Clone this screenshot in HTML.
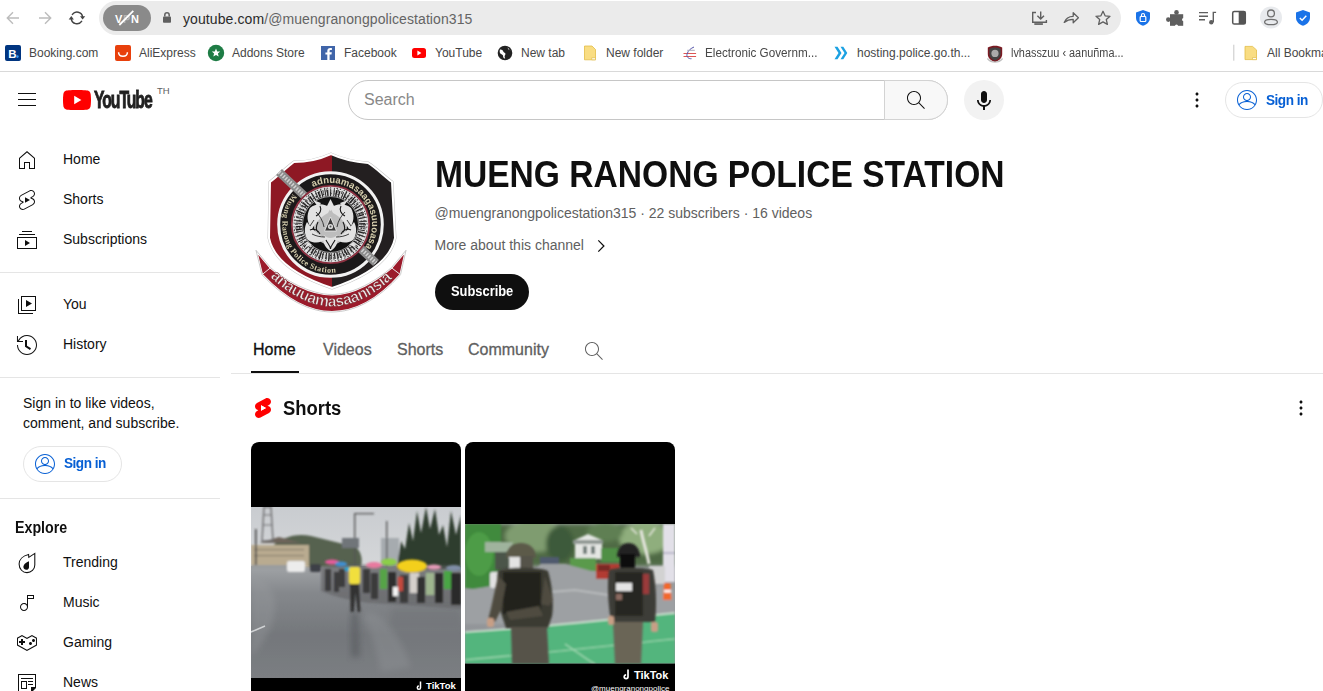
<!DOCTYPE html>
<html><head><meta charset="utf-8">
<style>
*{margin:0;padding:0;box-sizing:border-box}
html,body{width:1323px;height:691px;overflow:hidden;background:#fff;font-family:"Liberation Sans",sans-serif;color:#0f0f0f}
.a{position:absolute}
.t{position:absolute;white-space:nowrap;line-height:1}
svg{position:absolute;overflow:visible}
</style></head><body>
<!-- ===== Browser toolbar ===== -->
<div class="a" style="left:0;top:0;width:1323px;height:36px;background:#fff"></div>
<svg style="left:0;top:0" width="100" height="36">
 <g fill="none" stroke="#bcbcbc" stroke-width="1.4">
  <path d="M19 18H7.6M13 12.3 7.3 18 13 23.7"/>
  <path d="M39 18h11.4M45 12.3l5.7 5.7L45 23.7"/>
 </g>
 <g fill="none" stroke="#444" stroke-width="1.5" stroke-linecap="round">
  <path d="M72.4 14.4A5.7 5.7 0 0 1 82.6 16.8"/>
  <path d="M81.6 21.4A5.7 5.7 0 0 1 71.3 18.8"/>
 </g>
 <path d="M80 16.2H85.2L82.6 19.5z" fill="#444"/>
 <path d="M68.7 19.4H73.9L71.3 16.1z" fill="#444"/>
</svg>
<div class="a" style="left:99px;top:1px;width:1022px;height:34px;border-radius:17px;background:#ebebeb"></div>
<div class="a" style="left:103px;top:5px;width:48px;height:26px;border-radius:13px;background:#8a8a8a"></div>
<div class="t" style="left:115px;top:13.5px;font-size:11px;font-weight:bold;color:#fff;letter-spacing:0.6px">V<span style="opacity:.35">P</span>N</div>
<svg style="left:0;top:0" width="200" height="36"><path d="M119.3 25 133.3 10.8" stroke="#fff" stroke-width="1.8"/>
 <path d="M164.8 16.5v-1.6a2.2 2.2 0 0 1 4.4 0v1.6" fill="none" stroke="#5f5f5f" stroke-width="1.5"/>
 <rect x="163" y="16.4" width="8" height="6.4" rx="0.8" fill="#5f5f5f"/>
</svg>
<div class="t" style="left:183px;top:12px;font-size:14px;color:#2a2a2a;letter-spacing:0.09px">youtube.com<span style="color:#646464">/@muengranongpolicestation315</span></div>
<svg style="left:1020px;top:0" width="303" height="36">
 <g fill="none" stroke="#5f5f5f" stroke-width="1.4">
  <path d="M16 12.5h-3.3v9.8h13.7v-2.2"/>
  <path d="M20.7 11.5v7.6M17.4 15.8l3.3 3.3 3.3-3.3"/>
 </g>
 <rect x="14.3" y="23.2" width="8.6" height="1.7" fill="#5f5f5f"/>
 <path d="M44.2 22.4c1.7-4.4 5-6.1 9-6.1v-3.6l5.2 5-5.2 5v-3.4c-3.3 0-6.5 1-9 3.1z" fill="none" stroke="#5f5f5f" stroke-width="1.3" stroke-linejoin="round"/>
 <path d="M83 11.3l2.1 4.5 4.9.5-3.7 3.3 1.1 4.8L83 21.9l-4.4 2.5 1.1-4.8-3.7-3.3 4.9-.5z" fill="none" stroke="#5f5f5f" stroke-width="1.3" stroke-linejoin="round"/>
 <path d="M123 10l7 2.4v5.2c0 4.2-3 7-7 8.2-4-1.2-7-4-7-8.2v-5.2z" fill="#1a73e8"/>
 <rect x="120.2" y="16.5" width="5.6" height="5" rx="0.8" fill="none" stroke="#fff" stroke-width="1.2"/>
 <path d="M121.5 16.5v-1.5a1.5 1.5 0 0 1 3 0v1.5" fill="none" stroke="#fff" stroke-width="1.2"/>
 <rect x="150" y="14.2" width="13.2" height="11.6" fill="#5f5f5f"/>
 <circle cx="156.5" cy="12.4" r="2.3" fill="#5f5f5f"/>
 <circle cx="148.3" cy="19.6" r="2.3" fill="#5f5f5f"/>
 <circle cx="156.5" cy="26.2" r="1.6" fill="#fff"/>
 <circle cx="163.6" cy="19.6" r="1.6" fill="#fff"/>
 <g stroke="#5f5f5f" stroke-width="1.4"><path d="M179 12.6h9M179 16.2h9M179 19.8h6"/></g>
 <path d="M193.3 22V12.4h2.8" fill="none" stroke="#5f5f5f" stroke-width="1.4"/>
 <circle cx="191.3" cy="22.2" r="2.2" fill="#5f5f5f"/>
 <rect x="212.7" y="11.4" width="12.6" height="12.6" rx="1.6" fill="none" stroke="#555" stroke-width="1.5"/>
 <rect x="218.7" y="11.4" width="6.6" height="12.6" fill="#555"/>
 <circle cx="251" cy="17.5" r="11" fill="#e8eaed"/>
 <circle cx="251" cy="13.4" r="3.4" fill="none" stroke="#707070" stroke-width="1.3"/>
 <ellipse cx="251" cy="22" rx="6.4" ry="2.7" fill="none" stroke="#707070" stroke-width="1.3"/>
 <path d="M283 10l7 2.4v5.2c0 4.2-3 7-7 8.2-4-1.2-7-4-7-8.2v-5.2z" fill="#1a73e8"/>
 <path d="M279.8 18l2.3 2.3 4.2-4.6" fill="none" stroke="#fff" stroke-width="1.4"/>
</svg>
<!-- ===== Bookmarks bar ===== -->
<svg style="left:0;top:36px" width="1323" height="35">
 <rect x="5" y="9" width="16" height="16" rx="2" fill="#003580"/>
 <text x="8.3" y="21.5" font-family="Liberation Sans" font-weight="bold" font-size="11.5" fill="#fff">B</text>
 <circle cx="17.4" cy="20.6" r="1.3" fill="#3b9bf5"/>
 <rect x="115" y="9" width="16" height="16" rx="2" fill="#e8400c"/>
 <path d="M118.6 16.2c0 5.3 8.8 5.3 8.8 0" fill="none" stroke="#fff" stroke-width="1.5"/>
 <circle cx="216" cy="17" r="8.2" fill="#1e7c45"/>
 <path d="M216 12.6l1.2 2.8 3 .2-2.3 2 .8 2.9-2.7-1.6-2.7 1.6.8-2.9-2.3-2 3-.2z" fill="#fff"/>
 <rect x="321" y="10" width="14" height="14" fill="#4065a9"/>
 <path d="M329.6 24v-5.6h1.9l.3-2.1h-2.2v-1.4c0-.6.2-1 1.1-1h1.2v-1.9c-.2 0-.9-.1-1.7-.1-1.7 0-2.9 1-2.9 2.9v1.6h-1.9v2.1h1.9V24z" fill="#fff"/>
 <rect x="412" y="12" width="14" height="10" rx="2.5" fill="#f00"/>
 <path d="M417.4 14.6v4.8l4-2.4z" fill="#fff"/>
 <circle cx="505" cy="17" r="7.3" fill="#222"/>
 <path d="M500 13.5c1.5-.3 3 .6 3.2 1.8.2 1.4 1.8 1.2 2.2 2.3.3 1-.8 1.6-.8 3 0 .8.3 1.3.6 1.8-1.5.2-2.2-.9-2.1-2.3 0-1.3-1.5-1.7-2.3-2.3-.9-.6-1.5-1.6-.8-4.3zM507.5 11.3c.5.7.2 1.6 1.1 2.1.9.5 1.8.6 2.2 1.8" fill="#fff"/>
 <path d="M584.5 10h7.5l3.5 3.5v10.3h-11z" fill="#f9dd83" stroke="#e2bd48" stroke-width="0.8"/>
 <path d="M591.7 21.8h3.8v2h-3.8z" fill="#fff" stroke="#e2bd48" stroke-width="0.7"/>
 <g fill="none" stroke-width="1">
  <path d="M683.5 17.5h12.6M683.5 20.5h12.6" stroke="#d55"/>
  <path d="M694 11c-3 1.3-6 3.3-7 7.3-.6 2.6 1.5 4.7 4.5 4.4" stroke="#55a"/>
  <path d="M687.2 14.3h7.6" stroke="#aab"/>
 </g>
 <path d="M836 10.8l4 6.2-4 6.2h3l4-6.2-4-6.2zM842 10.8l4 6.2-4 6.2h2.8l4-6.2-4-6.2z" fill="#1ba1e2" transform="translate(-1.5 0)"/>
 <path d="M995 9.8c2.6 0 5 .6 7.2 1.7v6.6c0 4-3 6.8-7.2 8-4.2-1.2-7.2-4-7.2-8v-6.6c2.2-1.1 4.6-1.7 7.2-1.7z" fill="#7a1a22"/>
 <path d="M995 11.4c2 0 3.9.4 5.6 1.3v5.4c0 3.2-2.3 5.4-5.6 6.4-3.3-1-5.6-3.2-5.6-6.4v-5.4c1.7-.9 3.6-1.3 5.6-1.3z" fill="#444"/>
 <circle cx="995" cy="17.4" r="3.6" fill="#aaa"/>
 <path d="M987.4 22.5c2 2.4 4.6 3.6 7.6 3.6s5.6-1.2 7.6-3.6" fill="none" stroke="#c0c0c0" stroke-width="1.3"/>
 <rect x="1233.3" y="8.7" width="1" height="16" fill="#c8c8c8"/>
 <path d="M1245 10.4h7.5l4 3.5v9.7H1245z" fill="#f9dd83" stroke="#e2bd48" stroke-width="0.8"/>
 <path d="M1252.5 21.6h4v2h-4z" fill="#fff" stroke="#e2bd48" stroke-width="0.7"/>
</svg>
<div class="t" style="left:29px;top:47px;font-size:12px;color:#474747">Booking.com</div>
<div class="t" style="left:139px;top:47px;font-size:12px;color:#474747">AliExpress</div>
<div class="t" style="left:232px;top:47px;font-size:12px;color:#474747">Addons Store</div>
<div class="t" style="left:344px;top:47px;font-size:12px;color:#474747">Facebook</div>
<div class="t" style="left:435px;top:47px;font-size:12px;color:#474747">YouTube</div>
<div class="t" style="left:521px;top:47px;font-size:12px;color:#474747">New tab</div>
<div class="t" style="left:606px;top:47px;font-size:12px;color:#474747">New folder</div>
<div class="t" style="left:705px;top:47px;font-size:12px;color:#474747;transform-origin:0 0;transform:scaleX(0.975)">Electronic Governm...</div>
<div class="t" style="left:857px;top:47px;font-size:12px;color:#474747">hosting.police.go.th...</div>
<div class="t" style="left:1011px;top:47px;font-size:12px;color:#474747;transform-origin:0 0;transform:scaleX(0.907)">lvhasszuu ‹ aanuñma...</div>
<div class="t" style="left:1267px;top:47px;font-size:12px;color:#474747">All Bookmarks</div>
<div class="a" style="left:0;top:71px;width:1323px;height:1px;background:#d9d9d9"></div>
<!-- ===== Masthead ===== -->
<div class="a" style="left:348px;top:80px;width:600px;height:40px;border:1px solid #c6c6c6;border-radius:20px;background:#fff"></div>
<div class="a" style="left:884px;top:80px;width:64px;height:40px;border:1px solid #d3d3d3;border-radius:0 20px 20px 0;background:#f8f8f8"></div>
<div class="t" style="left:364px;top:92px;font-size:16px;color:#888">Search</div>
<div class="a" style="left:964px;top:80px;width:40px;height:40px;border-radius:20px;background:#f2f2f2"></div>
<div class="a" style="left:1225px;top:82px;width:98px;height:36px;border:1px solid #e5e5e5;border-radius:18px"></div>
<div class="t" style="left:1266px;top:93px;font-size:14px;font-weight:bold;color:#065fd4;letter-spacing:-0.5px;transform-origin:0 0;transform:scaleX(0.97)">Sign in</div>
<!-- ===== Sidebar ===== -->
<div class="t" style="left:63px;top:152px;font-size:14px">Home</div>
<div class="t" style="left:63px;top:192px;font-size:14px">Shorts</div>
<div class="t" style="left:63px;top:232px;font-size:14px">Subscriptions</div>
<div class="a" style="left:0;top:272px;width:220px;height:1px;background:#e5e5e5"></div>
<div class="t" style="left:63px;top:297px;font-size:14px">You</div>
<div class="t" style="left:63px;top:337px;font-size:14px">History</div>
<div class="a" style="left:0;top:377px;width:220px;height:1px;background:#e5e5e5"></div>
<div class="t" style="left:23px;top:397px;font-size:14px;line-height:20px;top:393px">Sign in to like videos,<br>comment, and subscribe.</div>
<div class="a" style="left:23px;top:446px;width:99px;height:36px;border:1px solid #e5e5e5;border-radius:18px"></div>
<div class="t" style="left:64px;top:456px;font-size:14px;font-weight:bold;color:#065fd4;letter-spacing:-0.5px;transform-origin:0 0;transform:scaleX(0.97)">Sign in</div>
<div class="a" style="left:0;top:498px;width:220px;height:1px;background:#e5e5e5"></div>
<div class="t" style="left:15px;top:520px;font-size:16px;font-weight:bold;transform-origin:0 0;transform:scaleX(0.89)">Explore</div>
<div class="t" style="left:63px;top:555px;font-size:14px">Trending</div>
<div class="t" style="left:63px;top:595px;font-size:14px">Music</div>
<div class="t" style="left:63px;top:635px;font-size:14px">Gaming</div>
<div class="t" style="left:63px;top:675px;font-size:14px">News</div>
<!-- ===== Channel header ===== -->
<div class="t" style="left:434.5px;top:157px;font-size:36px;font-weight:bold;transform-origin:0 0;transform:scaleX(0.9326)">MUENG RANONG POLICE STATION</div>
<div class="t" style="left:434.5px;top:206px;font-size:14px;color:#606060">@muengranongpolicestation315 · 22 subscribers · 16 videos</div>
<div class="t" style="left:434.5px;top:238px;font-size:14px;color:#606060">More about this channel</div>
<div class="a" style="left:435px;top:274px;width:94px;height:36px;border-radius:18px;background:#0f0f0f"></div>
<div class="t" style="left:451px;top:284px;font-size:14px;font-weight:bold;color:#fff;transform-origin:0 0;transform:scaleX(0.92)">Subscribe</div>
<!-- tabs -->
<div class="t" style="left:253px;top:342px;font-size:16px;color:#0f0f0f;-webkit-text-stroke:0.3px #0f0f0f">Home</div>
<div class="t" style="left:323px;top:342px;font-size:16px;color:#606060;-webkit-text-stroke:0.3px #606060">Videos</div>
<div class="t" style="left:397px;top:342px;font-size:16px;color:#606060;-webkit-text-stroke:0.3px #606060">Shorts</div>
<div class="t" style="left:468px;top:342px;font-size:16px;color:#606060;-webkit-text-stroke:0.3px #606060">Community</div>
<div class="a" style="left:251px;top:371px;width:48px;height:2px;background:#0f0f0f"></div>
<div class="a" style="left:231px;top:373px;width:1092px;height:1px;background:#e5e5e5"></div>
<!-- shorts -->
<div class="t" style="left:283px;top:398px;font-size:20px;font-weight:bold;transform-origin:0 0;transform:scaleX(0.92)">Shorts</div>
<!-- ===== Avatar ===== -->
<svg style="left:250px;top:150px" width="165" height="165" viewBox="0 0 165 165">
 <defs>
  <clipPath id="shc"><path d="M81 4C70 9 56 12 44 12 36 18 28 26 20 32L19 88C24 112 52 128 82 138 112 128 140 112 145 88L142 32C134 26 126 18 118 13 106 12 92 9 81 4Z"/></clipPath>
  <filter id="bl" x="-20%" y="-20%" width="140%" height="140%"><feGaussianBlur stdDeviation="0.45"/></filter>
  <path id="topArc" d="M59.75 38.56A41.5 41.5 0 0 1 112.3 101.2"/>
  <path id="botArc" d="M52.7 34.8A48.5 48.5 0 0 0 104.75 116.5"/>
  <path id="ribArc" d="M20 127C40 146 62 156.5 82 156.5 102 156.5 124 146 144 127"/>
 </defs>
 <path d="M81 4C70 9 56 12 44 12 36 18 28 26 20 32L19 88C24 112 52 128 82 138 112 128 140 112 145 88L142 32C134 26 126 18 118 13 106 12 92 9 81 4Z" fill="#fff" stroke="#c4c4c4" stroke-width="3"/>
 <g clip-path="url(#shc)">
  <rect x="0" y="0" width="82" height="165" fill="#8e1824"/>
  <rect x="82" y="0" width="83" height="165" fill="#231f20"/>
 </g>
 <path d="M81 4C70 9 56 12 44 12 36 18 28 26 20 32L19 88C24 112 52 128 82 138 112 128 140 112 145 88L142 32C134 26 126 18 118 13 106 12 92 9 81 4Z" fill="none" stroke="#fff" stroke-width="2"/>
 <circle cx="80.5" cy="74.5" r="51.8" fill="#1b191a" stroke="#f2f2f2" stroke-width="3"/>
 <g font-family="Liberation Serif" font-weight="bold" fill="#d6cfae" filter="url(#bl)">
  <text font-size="9.5" font-family="Liberation Sans" letter-spacing="0"><textPath href="#topArc" startOffset="3%">adnuamasaagasuuoasazuoy</textPath></text>
  <text font-size="8" letter-spacing="0.45"><textPath href="#botArc" startOffset="9%">Muang Ranong Police Station</textPath></text>
 </g>
 <path d="M29 22 L126 113" stroke="#8c8c8c" stroke-width="8.5"/>
 <path d="M29 22 L126 113" stroke="#d0d0d0" stroke-width="4" stroke-dasharray="1.5 1.5"/>
 <circle cx="80.5" cy="74.5" r="38.6" fill="#1b191a" stroke="#8b3040" stroke-width="2"/>
 <circle cx="80.5" cy="74.5" r="33" fill="none" stroke="#d4d4d4" stroke-width="9" stroke-dasharray="1.8 1.1 2.6 0.9 1.2 1.4" filter="url(#bl)"/>
 <circle cx="80.5" cy="74.5" r="31" fill="none" stroke="#333" stroke-width="1.6" stroke-dasharray="0.8 2.2 1.5 3" filter="url(#bl)"/>
 <circle cx="80.5" cy="74.5" r="35.5" fill="none" stroke="#f0f0f0" stroke-width="1.2" stroke-dasharray="3 1.5" filter="url(#bl)"/>
 <circle cx="80.5" cy="74.5" r="34" fill="none" stroke="#4a4a4a" stroke-width="3" stroke-dasharray="1 2.8" filter="url(#bl)"/>
 <circle cx="80.5" cy="74.5" r="37.4" fill="none" stroke="#e8e8e8" stroke-width="0.8"/>
 <circle cx="80.5" cy="74.5" r="28" fill="#121212" stroke="#9a9a9a" stroke-width="1"/>
 <path d="M66 66C70 60 76 58 80.5 60 85 58 91 60 95 66 99 74 97 86 90 92 84 96 77 96 71 92 64 86 62 74 66 66z" fill="#bdbdbd" filter="url(#bl)"/>
 <g fill="#e2e2e2" filter="url(#bl)">
  <path d="M80.5 49 84.5 57 80.5 61 76.5 57z"/>
  <path d="M80.5 58C74 53 66 53 60 58 56 65 57 73 62 79 66 72 72 66 78 63z"/>
  <path d="M80.5 58C87 53 95 53 101 58 105 65 104 73 99 79 95 72 89 66 83 63z"/>
  <path d="M57 72C54 77 54 85 58 90 64 94 71 93 76 89 69 85 62 80 57 72z"/>
  <path d="M104 72C107 77 107 85 103 90 97 94 90 93 85 89 92 85 99 80 104 72z"/>
  <path d="M74 85C72 91 74 97 80.5 101 87 97 89 91 87 85 84 89 77 89 74 85z"/>
  <path d="M68 57 63 50 71 53zM93 57 98 50 90 53zM58 92 55 97 62 95zM103 92 106 97 99 95z"/>
 </g>
 <g fill="none" stroke="#161616" stroke-width="0.8">
  <path d="M66 62C70 66 73 71 74 77M95 62C91 66 88 71 87 77M62 84C66 86 70 87 75 87M99 84C95 86 91 87 86 87M64 70 60 76M97 70 101 76"/>
  <path d="M70 56C72 60 70 64 66 66M91 56C89 60 91 64 95 66M60 80C64 78 68 80 70 84M101 80C97 78 93 80 91 84M76 90C78 94 80.5 96 80.5 99M85 90C83 94 80.5 96 80.5 99M68 72C66 76 66 80 68 82M93 72C95 76 95 80 93 82" stroke-width="1.1"/>
 </g>
 <path d="M74.5 81 80.5 67 86.5 81z" fill="#3a3a3a" stroke="#e6e6e6" stroke-width="0.9"/>
 <circle cx="80.5" cy="76.5" r="2.6" fill="#d8d8d8"/>
 <circle cx="80.5" cy="76.5" r="1" fill="#555"/>
 <path d="M6 100.3L20.6 117.7C35 130 60 144.5 82 144.5 104 144.5 127 130 141.4 117.7L156 100.3 150.5 124.7C128 150 104 162 82 162 60 162 36 150 12 124.7Z" fill="#9b1b2b" stroke="#fff" stroke-width="2.2"/>
 <path d="M6 100.3L20.6 117.7C35 130 60 144.5 82 144.5 104 144.5 127 130 141.4 117.7L156 100.3 150.5 124.7C128 150 104 162 82 162 60 162 36 150 12 124.7Z" fill="none" stroke="#b5b5b5" stroke-width="0.7"/>
 <path d="M20.6 117.7 12 124.7M141.4 117.7 150.5 124.7" stroke="#e8e8e8" stroke-width="1"/>
 <g font-family="Liberation Sans" font-weight="bold" fill="#e8e2e2" stroke="#6a1018" stroke-width="0.5" filter="url(#bl)">
  <text font-size="15.5" letter-spacing="-0.3"><textPath href="#ribArc" startOffset="0%">anauuamasaannsıaonsauau</textPath></text>
 </g>
</svg>
<!-- ===== Shorts thumbnails ===== -->
<svg style="left:251px;top:442px" width="210" height="249" viewBox="0 0 210 249">
 <defs>
  <clipPath id="c1"><path d="M8 0H202A8 8 0 0 1 210 8V260H0V8A8 8 0 0 1 8 0Z"/></clipPath>
  <clipPath id="p1"><rect x="0" y="0" width="210" height="171"/></clipPath>
  <linearGradient id="sky1" x1="0" y1="0" x2="0" y2="1"><stop offset="0" stop-color="#c9ccd0"/><stop offset="1" stop-color="#d5d7d9"/></linearGradient>
  <linearGradient id="road1" x1="0" y1="0" x2="0" y2="1"><stop offset="0.33" stop-color="#a3a6a9"/><stop offset="0.5" stop-color="#85888c"/><stop offset="0.75" stop-color="#74777b"/><stop offset="1" stop-color="#7b7e82"/></linearGradient>
  <filter id="b1" x="-10%" y="-10%" width="120%" height="120%"><feGaussianBlur stdDeviation="1.1"/></filter>
  <filter id="b0" x="-5%" y="-5%" width="110%" height="110%"><feGaussianBlur stdDeviation="0.6"/></filter>
  <filter id="b2" x="-50%" y="-50%" width="200%" height="200%"><feGaussianBlur stdDeviation="3"/></filter>
 </defs>
 <g clip-path="url(#c1)">
  <rect width="210" height="249" fill="#000"/>
  <g transform="translate(0 65)" clip-path="url(#p1)">
  <g filter="url(#b0)">
   <rect width="210" height="171" fill="url(#road1)"/>
   <rect width="210" height="59" fill="url(#sky1)"/>
   <g filter="url(#b1)">
    <path d="M18 42C30 30 45 26 60 29 75 33 90 36 105 40 110 45 112 52 110 60H18z" fill="#56624f"/>
    <path d="M0 38h58v22H0z" fill="#b9ab90"/>
    <path d="M8 36 28 30 50 36z" fill="#6d645a"/>
    <rect x="3" y="42" width="50" height="1.2" fill="#8b8070"/>
    <rect x="3" y="48" width="50" height="1.2" fill="#8b8070"/>
    <path d="M13 0h7l2 34h-11z" fill="none" stroke="#6e6e70" stroke-width="1.4"/>
    <path d="M13 8h7M12 18h9" stroke="#6e6e70" stroke-width="1"/>
    <rect x="4" y="22" width="1.6" height="38" fill="#444"/>
    <path d="M103 6h20v1.2h-18.6V60H103z" fill="#555"/>
    <rect x="91" y="31" width="17" height="10" fill="#6f7479"/>
    <rect x="130" y="31" width="18" height="28" fill="#a6abaf"/>
    <rect x="135" y="14" width="1.4" height="46" fill="#555"/>
    <path d="M146 60 150 34 154 42 158 16 162 34 166 4 170 26 175 0 179 22 184 2 188 28 192 18 196 40 200 4 205 28 210 8V62H146z" fill="#2f3c2d"/>
    <rect x="36" y="54" width="18" height="11" rx="2" fill="#ececec"/>
    <rect x="59" y="57" width="11" height="8" rx="2" fill="#3d4146"/>
    <path d="M0 58h36v4H0z" fill="#9a9c9e"/>
   </g>
   <g filter="url(#b1)">
    <path d="M70 60C90 57 130 57 210 59V102C180 100 150 98 120 96 100 94 85 90 70 84z" fill="#5f6164" opacity=".6"/>
    <ellipse cx="81" cy="55" rx="7" ry="2.6" fill="#e45a9a"/>
    <ellipse cx="90" cy="57" rx="6" ry="2.6" fill="#3f8fd0"/>
    <ellipse cx="97" cy="62" rx="4" ry="2" fill="#2aa2cf"/>
    <ellipse cx="123" cy="58" rx="8" ry="3" fill="#e8799f"/>
    <ellipse cx="138" cy="55" rx="8" ry="3.5" fill="#8ccf4a"/>
    <ellipse cx="161" cy="59" rx="15" ry="6.5" fill="#f3cf1c"/>
    <ellipse cx="183" cy="60" rx="7" ry="2.6" fill="#e49bb8"/>
    <ellipse cx="203" cy="61" rx="8" ry="3" fill="#7f8ea6"/>
    <rect x="98" y="60" width="11" height="17" rx="2" fill="#f1df3e"/>
    <path d="M99 77h9l1.5 28h-3l-2-20-1.5 20h-3.5z" fill="#333"/>
    <path d="M74 62h6v22h-6zM83 65h5v20h-5zM88 62h6v18h-6z" fill="#3c3c3c"/>
    <path d="M112 62h7v24h-7zM120 66h7v26h-7z" fill="#3a3a3a"/>
    <rect x="129" y="62" width="7" height="20" fill="#56a447"/>
    <path d="M137 65h8v30h-8z" fill="#2f2f2f"/>
    <rect x="142" y="80" width="5" height="9" fill="#f4f4f4"/>
    <path d="M149 68h8v28h-8z" fill="#3b3b3b"/>
    <rect x="147" y="70" width="5" height="14" fill="#c34a3c"/>
    <rect x="159" y="66" width="9" height="20" fill="#d5d0cb"/>
    <path d="M166 70h8v26h-8z" fill="#333"/>
    <rect x="175" y="66" width="8" height="22" fill="#9eb58e"/>
    <path d="M184 66h8v30h-8z" fill="#2c2c2c"/>
    <rect x="193" y="64" width="8" height="18" fill="#4aa545"/>
    <path d="M200 66h10v32h-10z" fill="#2b2b2b"/>
   </g>
   <path d="M0 70C20 72 30 90 20 120 10 140 0 150 0 150z" fill="#9b9ea1" opacity=".35" filter="url(#b2)"/>
   <path d="M120 105C135 110 150 130 160 160L130 165C125 140 118 120 112 108z" fill="#9a9da0" opacity=".3" filter="url(#b2)"/>
   <path d="M100 105h7l2 45h-9z" fill="#55585c" opacity=".6" filter="url(#b2)"/>
   <path d="M140 100h70v20h-70z" fill="#6f7276" opacity=".45" filter="url(#b2)"/>
   <path d="M0 125 14 119" stroke="#d0d2d4" stroke-width="1.5"/>
  </g>
  </g>
  <text x="175" y="247" font-family="Liberation Sans" font-weight="bold" font-size="9.5" fill="#fff">TikTok</text>
  <path d="M169.5 239.5v6.2a1.6 1.6 0 1 1-1.6-1.6" fill="none" stroke="#fff" stroke-width="1.5"/>
 </g>
</svg>
<svg style="left:465px;top:442px" width="210" height="249" viewBox="0 0 210 249">
 <defs>
  <clipPath id="c2"><path d="M8 0H202A8 8 0 0 1 210 8V260H0V8A8 8 0 0 1 8 0Z"/></clipPath>
  <clipPath id="p2"><rect x="0" y="0" width="210" height="139.5"/></clipPath>
  <filter id="b3" x="-10%" y="-10%" width="120%" height="120%"><feGaussianBlur stdDeviation="1.1"/></filter>
  <filter id="b4" x="-10%" y="-10%" width="120%" height="120%"><feGaussianBlur stdDeviation="2"/></filter>
  <linearGradient id="rd2" x1="0" y1="0" x2="0" y2="1"><stop offset="0" stop-color="#a2a5a8"/><stop offset="1" stop-color="#8d9094"/></linearGradient>
 </defs>
 <g clip-path="url(#c2)">
  <rect width="210" height="249" fill="#000"/>
  <g transform="translate(0 82)" clip-path="url(#p2)">
   <rect width="210" height="140" fill="url(#rd2)"/>
   <g filter="url(#b4)">
    <rect width="210" height="42" fill="#4f6b45"/>
    <ellipse cx="70" cy="12" rx="30" ry="16" fill="#7f9c70"/>
    <ellipse cx="95" cy="20" rx="14" ry="18" fill="#3e5a3a"/>
    <ellipse cx="180" cy="14" rx="26" ry="16" fill="#8fae7d"/>
    <ellipse cx="140" cy="8" rx="18" ry="10" fill="#5f7f52"/>
   </g>
   <g filter="url(#b3)">
    <path d="M0 0h36v62C25 66 12 66 0 64z" fill="#3f8a3d"/>
    <ellipse cx="14" cy="30" rx="14" ry="22" fill="#4d9c46"/>
    <path d="M20 18h28v10H20z" fill="#9fb39d"/>
    <path d="M30 28h18v18H30z" fill="#4b5548"/>
    <path d="M110 16 123 10 137 16V35H110z" fill="#e4e6e3"/>
    <path d="M108 16h30v4h-30z" fill="#8e9692"/>
    <path d="M118 22h4v8h-4zM126 22h4v8h-4z" fill="#6e7a78"/>
    <path d="M105 34h26v13h-26z" fill="#5a9a4c"/>
    <path d="M136 24h20v14h-20z" fill="#4f8f45"/>
    <path d="M176 6C178 18 182 28 184 40" stroke="#e6e6df" stroke-width="3" fill="none"/>
    <path d="M184 12 190 4M172 10 166 4" stroke="#e6e6df" stroke-width="1.5"/>
    <path d="M198 0h12v58h-12z" fill="#e2e0e8"/>
    <path d="M198 28h12v2h-12z" fill="#b9b6c9"/>
    <path d="M75 33h19v7H75z" fill="#4f5a6e"/>
    <path d="M0 66C30 62 60 56 76 40H100L130 48 210 66V100H0z" fill="#9da0a3"/>
    <path d="M60 70 110 66 150 72" stroke="#b8babc" stroke-width="2" fill="none"/>
    <rect x="25" y="48" width="20" height="16" rx="2" fill="#e2e2e2"/>
    <path d="M131 40h24v15h-24z" fill="#b23a33"/>
    <rect x="133" y="41" width="12" height="6" fill="#7a2a28"/>
    <rect x="184" y="42" width="16" height="18" fill="#d2d2d2"/>
    <path d="M0 108C70 104 140 96 210 89V140H0z" fill="#52b57d"/>
    <path d="M0 108C70 104 140 96 210 89" stroke="#d4ead9" stroke-width="1.6" fill="none"/>
    <path d="M0 136C70 130 140 122 210 115" stroke="#a6dbb6" stroke-width="1.2" fill="none"/>
    <path d="M100 120C115 130 125 138 130 140" stroke="#a6dbb6" stroke-width="1.2" fill="none"/>
    <path d="M199 59h6.5l1 17h-8.5z" fill="#f2682b"/>
    <rect x="199" y="66" width="7" height="2.5" fill="#fff"/>
   </g>
   <g filter="url(#b3)">
    <path d="M41 34C41 24 48 19 56 19 64 19 71 24 71 34z" fill="#5c5a4a"/>
    <path d="M44 33h12v13H44z" fill="#e3e3e3"/>
    <path d="M55 32h13v14H55z" fill="#55524a"/>
    <path d="M33 46C40 43 76 43 83 47 87 60 89 80 87 92L83 104H41L37 92C33 80 31 60 33 46z" fill="#3b3a33"/>
    <path d="M38 48h38v42H38z" fill="#22221e"/>
    <path d="M33 52 26 84 23 96 30 98 36 86 41 60z" fill="#4f4c40"/>
    <path d="M80 52 88 76 84 82 76 80z" fill="#4f4c40"/>
    <path d="M41 88 74 82 78 92 45 96z" fill="#4f4c40"/>
    <rect x="22" y="94" width="7" height="9" rx="2" fill="#c79f86"/>
    <path d="M46 103h36l2 37H47z" fill="#57534a"/>
    <path d="M152 33C152 24 157 19 163.5 19 170 19 175 24 175 33z" fill="#232323"/>
    <path d="M155 30h15v15h-15z" fill="#111"/>
    <path d="M144 46C150 43 180 43 188 46 191 60 192 80 190 98H146C143 80 142 60 144 46z" fill="#3e3c37"/>
    <path d="M150 48h28v44h-28z" fill="#262622"/>
    <rect x="151" y="59" width="16" height="8" fill="#e4e4e4"/>
    <rect x="151" y="70" width="6" height="6" fill="#8a6a60"/>
    <path d="M178 50h6v20h-6z" fill="#9a3a3a"/>
    <path d="M148 98h30l-2 42h-26z" fill="#6b6556"/>
    <rect x="143" y="92" width="6" height="9" rx="2" fill="#c79f86"/>
    <rect x="186" y="98" width="7" height="10" rx="2" fill="#c79f86"/>
   </g>
  </g>
  <text x="169" y="237" font-family="Liberation Sans" font-weight="bold" font-size="11" fill="#fff">TikTok</text>
  <path d="M163 227.5v7.2a1.9 1.9 0 1 1-1.9-1.9" fill="none" stroke="#fff" stroke-width="1.7"/>
  <text x="126" y="248.5" font-family="Liberation Sans" font-size="8" fill="#fff">@muengranongpolice</text>
 </g>
</svg>
<!-- ===== Masthead icons ===== -->
<svg style="left:15px;top:88px" width="24" height="24" viewBox="0 0 24 24"><path d="M21 6H3V5h18v1zm0 5H3v1h18v-1zm0 6H3v1h18v-1z" fill="#0f0f0f"/></svg>
<svg style="left:63px;top:90px" width="28" height="20" viewBox="0 0 28 20"><path d="M27.4 3.1A3.6 3.6 0 0 0 24.9.6C22.7 0 14 0 14 0S5.3 0 3.1.6A3.6 3.6 0 0 0 .6 3.1C0 5.3 0 10 0 10s0 4.7.6 6.9a3.6 3.6 0 0 0 2.5 2.5C5.3 20 14 20 14 20s8.7 0 10.9-.6a3.6 3.6 0 0 0 2.5-2.5C28 14.7 28 10 28 10s0-4.7-.6-6.9z" fill="#f00"/><path d="M11.2 14.3 18.4 10l-7.2-4.3z" fill="#fff"/></svg>
<div class="t" style="left:94px;top:88px;font-size:24px;font-weight:bold;color:#212121;letter-spacing:-1.6px;-webkit-text-stroke:0.9px #212121;transform-origin:0 0;transform:scaleX(0.655)">YouTube</div>
<div class="t" style="left:157px;top:86px;font-size:9.5px;color:#606060">TH</div>
<svg style="left:904px;top:88px" width="24" height="24" viewBox="0 0 24 24"><path d="m20.87 20.17-5.59-5.59C16.35 13.35 17 11.75 17 10c0-3.87-3.13-7-7-7s-7 3.13-7 7 3.13 7 7 7c1.75 0 3.35-.65 4.58-1.71l5.59 5.59.7-.71zM10 16c-3.31 0-6-2.69-6-6s2.69-6 6-6 6 2.69 6 6-2.69 6-6 6z" fill="#0f0f0f"/></svg>
<svg style="left:972px;top:88px" width="24" height="24" viewBox="0 0 24 24"><path d="M12 15c1.66 0 2.99-1.34 2.99-3L15 6c0-1.66-1.34-3-3-3S9 4.34 9 6v6c0 1.66 1.34 3 3 3zm5.3-3c0 3-2.54 5.1-5.3 5.1S6.7 15 6.7 12H5c0 3.42 2.72 6.23 6 6.72V22h2v-3.28c3.28-.48 6-3.3 6-6.72h-1.7z" fill="#0f0f0f"/></svg>
<svg style="left:1185px;top:88px" width="24" height="24" viewBox="0 0 24 24"><path d="M12 16.5c.83 0 1.5.67 1.5 1.5s-.67 1.5-1.5 1.5-1.5-.67-1.5-1.5.67-1.5 1.5-1.5zM10.5 12c0 .83.67 1.5 1.5 1.5s1.5-.67 1.5-1.5-.67-1.5-1.5-1.5-1.5.67-1.5 1.5zm0-6c0 .83.67 1.5 1.5 1.5s1.5-.67 1.5-1.5-.67-1.5-1.5-1.5-1.5.67-1.5 1.5z" fill="#0f0f0f"/></svg>
<svg style="left:1235px;top:88px" width="24" height="24" viewBox="0 0 24 24"><path d="M12 2C6.48 2 2 6.480 2 12s4.48 10 10 10 10-4.48 10-10S17.52 2 12 2zm0 1c4.960 0 9 4.04 9 9 0 1.42-.34 2.76-.93 3.96-1.53-1.72-3.98-2.89-7.38-3.030C14.57 12.6 16 10.97 16 9c0-2.21-1.79-4-4-4S8 6.79 8 9c0 1.97 1.43 3.6 3.31 3.93-3.4.14-5.85 1.31-7.38 3.030C3.34 14.76 3 13.42 3 12c0-4.96 4.04-9 9-9zM9 9c0-1.65 1.35-3 3-3s3 1.35 3 3-1.35 3-3 3-3-1.35-3-3zm3 12c-3.16 0-5.94-1.64-7.55-4.12C6.01 14.93 8.61 13.9 12 13.9c3.390 0 5.99 1.03 7.55 2.98C17.94 19.36 15.16 21 12 21z" fill="#065fd4"/></svg>
<!-- ===== Sidebar icons ===== -->
<svg style="left:15px;top:148px" width="24" height="24" viewBox="0 0 24 24"><path d="m12 4.44 7 6.09V20h-4v-6H9v6H5v-9.47l7-6.09m0-1.32-8 6.96V21h6v-6h4v6h6V10.08l-8-6.96z" fill="#0f0f0f"/></svg>
<svg style="left:15px;top:188px" width="24" height="24" viewBox="0 0 24 24"><path d="M10 14.65v-5.3L15 12l-5 2.65zm7.77-4.33c-.77-.32-1.2-.5-1.2-.5L18 9.06c1.84-.96 2.53-3.23 1.56-5.06s-3.24-2.53-5.07-1.56L6 6.94c-1.29.68-2.07 2.04-2 3.49.07 1.42.93 2.67 2.22 3.25.03.01 1.2.5 1.2.5L6 14.93c-1.83.97-2.53 3.24-1.56 5.07.97 1.83 3.24 2.53 5.07 1.56l8.5-4.5c1.29-.68 2.06-2.04 1.99-3.49-.07-1.42-.94-2.68-2.23-3.25zm-.23 5.86-8.5 4.5c-1.34.71-3.01.2-3.72-1.14-.71-1.34-.2-3.01 1.14-3.72l2.04-1.08v-1.21l-.69-.28-1.11-.46c-.99-.41-1.650-1.35-1.7-2.41-.05-1.06.52-2.06 1.46-2.56l8.5-4.5c1.34-.71 3.01-.2 3.72 1.14.71 1.34.2 3.01-1.14 3.72L15.5 9.26v1.21l1.8.74c.99.41 1.65 1.35 1.7 2.41.05 1.06-.52 2.06-1.46 2.56z" fill="#0f0f0f"/></svg>
<svg style="left:15px;top:228px" width="24" height="24" viewBox="0 0 24 24"><path d="M10 18v-6l5 3-5 3zm7-15H7v1h10V3zm3 3H4v1h16V6zm2 3H2v12h20V9zM3 10h18v10H3V10z" fill="#0f0f0f"/></svg>
<svg style="left:15px;top:293px" width="24" height="24" viewBox="0 0 24 24"><path d="m11 7 6 3.5-6 3.5V7zm7 13H4V6H3v15h15v-1zm3-2H6V3h15v15zM7 17h13V4H7v13z" fill="#0f0f0f"/></svg>
<svg style="left:15px;top:333px" width="24" height="24" viewBox="0 0 24 24"><path d="M14.97 16.95 10 13.87V7h2v5.76l4.03 2.49-1.06 1.7zM22 12c0 5.51-4.49 10-10 10S2 17.51 2 12h1c0 4.96 4.04 9 9 9s9-4.04 9-9-4.04-9-9-9C8.81 3 5.92 4.64 4.28 7.38c-.11.18-.22.37-.31.56L3.94 8H8v1H1.96V3h1v4.74c.04-.09.07-.17.11-.25.11-.22.23-.42.35-.63C5.22 3.86 8.51 2 12 2c5.51 0 10 4.49 10 10z" fill="#0f0f0f"/></svg>
<svg style="left:33px;top:452px" width="24" height="24" viewBox="0 0 24 24"><path d="M12 2C6.48 2 2 6.480 2 12s4.48 10 10 10 10-4.48 10-10S17.52 2 12 2zm0 1c4.960 0 9 4.04 9 9 0 1.42-.34 2.76-.93 3.96-1.53-1.72-3.98-2.89-7.38-3.030C14.57 12.6 16 10.97 16 9c0-2.21-1.79-4-4-4S8 6.79 8 9c0 1.97 1.43 3.6 3.31 3.93-3.4.14-5.85 1.31-7.38 3.030C3.34 14.76 3 13.42 3 12c0-4.96 4.04-9 9-9zM9 9c0-1.65 1.35-3 3-3s3 1.35 3 3-1.35 3-3 3-3-1.35-3-3zm3 12c-3.16 0-5.94-1.64-7.55-4.12C6.01 14.93 8.61 13.9 12 13.9c3.390 0 5.99 1.03 7.55 2.98C17.940 19.36 15.16 21 12 21z" fill="#065fd4"/></svg>
<svg style="left:15px;top:551px" width="24" height="24" viewBox="0 0 24 24"><path d="M13.6 3.5 13.8 6.4 19.8 2.4V14C19.8 18.4 16.2 21.6 12 21.6S4.1 18.2 4.1 13C4.1 8.5 8 4.8 13.6 3.5Z" fill="none" stroke="#0f0f0f" stroke-width="1.05"/><path d="M14 10.2V16.2C14 17.7 12.9 18.8 11.3 18.8 9.7 18.8 8.4 17.6 8.4 16 8.4 13.4 11 11.3 14 10.2Z" fill="#0f0f0f"/></svg>
<svg style="left:15px;top:591px" width="24" height="24" viewBox="0 0 24 24"><path d="M12 4v9.38C11.27 12.54 10.2 12 9 12c-2.21 0-4 1.79-4 4s1.790 4 4 4 4-1.79 4-4V8h6V4h-7zm-3 15c-1.66 0-3-1.34-3-3s1.34-3 3-3 3 1.34 3 3-1.34 3-3 3zm9-12h-5V5h5v2z" fill="#0f0f0f"/></svg>
<svg style="left:15px;top:631px" width="24" height="24" viewBox="0 0 24 24"><path d="M10 12H8v2H6v-2H4v-2h2V8h2v2h2v2zm7 .5c0-.83-.67-1.5-1.5-1.5s-1.5.67-1.5 1.5.67 1.5 1.5 1.5 1.5-.67 1.5-1.5zm3-3c0-.83-.67-1.5-1.5-1.5S17 8.67 17 9.5s.67 1.5 1.5 1.5 1.5-.67 1.5-1.5zm-3.03-4.35-4.5 2.53-.49.27-.49-.27-4.5-2.53L3 7.39v6.43l8.98 5.04 8.98-5.04V7.39l-3.99-2.24m0-1.15 4.99 2.8v7.6L11.98 20 2 14.4V6.8L6.99 4l4.99 2.8L16.97 4z" fill="#0f0f0f"/></svg>
<svg style="left:15px;top:671px" width="24" height="24" viewBox="0 0 24 24"><path d="M11 11v6H7v-6h4m1-1H6v8h6v-8zM3 3.03V21h14l4-4V3.03M20 4v11.99l-.01.01H16v3.99l-.01.01H4V4h16zm-2 4H6V7h12v1zm0 3h-5v-1h5v1zm0 3h-5v-1h5v1z" fill="#0f0f0f"/></svg>
<!-- ===== Channel icons ===== -->
<svg style="left:0;top:0" width="700" height="430">
 <path d="M598.3 240.4 603.9 246 598.3 251.6" fill="none" stroke="#0f0f0f" stroke-width="1.25"/>
</svg>
<svg style="left:582px;top:339px" width="24" height="24" viewBox="0 0 24 24"><path d="m20.87 20.17-5.59-5.59C16.35 13.35 17 11.75 17 10c0-3.87-3.13-7-7-7s-7 3.13-7 7 3.13 7 7 7c1.75 0 3.35-.65 4.58-1.71l5.59 5.590.7-.71zM10 16c-3.31 0-6-2.69-6-6s2.69-6 6-6 6 2.69 6 6-2.69 6-6 6z" fill="#606060"/></svg>
<svg style="left:251px;top:396px" width="24" height="24" viewBox="0 0 24 24"><path fill="#f00" d="M17.77 10.32c-.77-.32-1.2-.5-1.2-.5L18 9.06c1.84-.96 2.53-3.23 1.56-5.06s-3.24-2.53-5.07-1.56L6 6.94c-1.29.68-2.07 2.04-2 3.49.07 1.42.93 2.67 2.22 3.25.03.01 1.2.5 1.2.5L6 14.93c-1.83.97-2.53 3.24-1.56 5.07.97 1.83 3.24 2.53 5.07 1.56l8.5-4.5c1.29-.68 2.06-2.04 1.99-3.49-.07-1.42-.94-2.68-2.23-3.25zM10 14.65v-5.3L15 12l-5 2.65z"/><path fill="#fff" d="m10 14.65 5-2.65-5-2.65z"/></svg>
<svg style="left:1289px;top:396px" width="24" height="24" viewBox="0 0 24 24"><path d="M12 16.5c.83 0 1.5.67 1.5 1.5s-.67 1.5-1.5 1.5-1.5-.67-1.5-1.5.67-1.5 1.5-1.5zM10.5 12c0 .83.67 1.5 1.5 1.5s1.5-.67 1.5-1.5-.67-1.5-1.5-1.5-1.5.67-1.5 1.5zm0-6c0 .83.67 1.5 1.5 1.5s1.5-.67 1.5-1.5-.67-1.5-1.5-1.5-1.5.67-1.5 1.5z" fill="#0f0f0f"/></svg>
</body></html>
